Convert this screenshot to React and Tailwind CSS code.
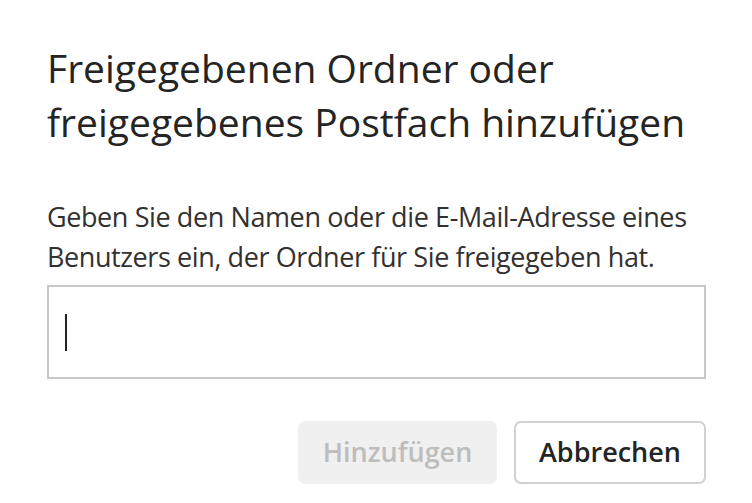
import React from 'react'

const font = { fontFamily: '"Open Sans", "Noto Sans", sans-serif' }

const App = () => {
  return (
    <div className="w-[752px] h-[503px] bg-white overflow-hidden" style={font}>
      <div className="pl-[47px] pr-[46px] pt-[41px] flex flex-col">
        {/* Title */}
        <h1 className="text-[39px] leading-[54px] font-normal text-[#242424] tracking-[0px]">
          Freigegebenen Ordner oder
          <br />
          freigegebenes Postfach hinzufügen
        </h1>

        {/* Description */}
        <p className="mt-[48px] text-[27px] leading-[40px] text-[#323130] tracking-[-0.4px]">
          Geben Sie den Namen oder die E-Mail-Adresse eines
          <br />
          Benutzers ein, der Ordner für Sie freigegeben hat.
        </p>

        {/* Input */}
        <div className="mt-[8px] h-[94px] border-2 border-[#c8c8c8] flex items-center pl-[16px]">
          <div className="w-[2px] h-[37px] bg-[#242424]"></div>
        </div>

        {/* Actions */}
        <div className="mt-[42px] flex justify-end gap-[17px]">
          <button className="w-[199px] h-[63px] rounded-[7px] bg-[#f0f0f0] text-[#bdbdbd] text-[27px] font-semibold">
            Hinzufügen
          </button>
          <button className="w-[192px] h-[63px] rounded-[7px] bg-white border-2 border-[#d1d1d1] text-[#242424] text-[27px] font-semibold">
            Abbrechen
          </button>
        </div>
      </div>
    </div>
  )
}

export default App
